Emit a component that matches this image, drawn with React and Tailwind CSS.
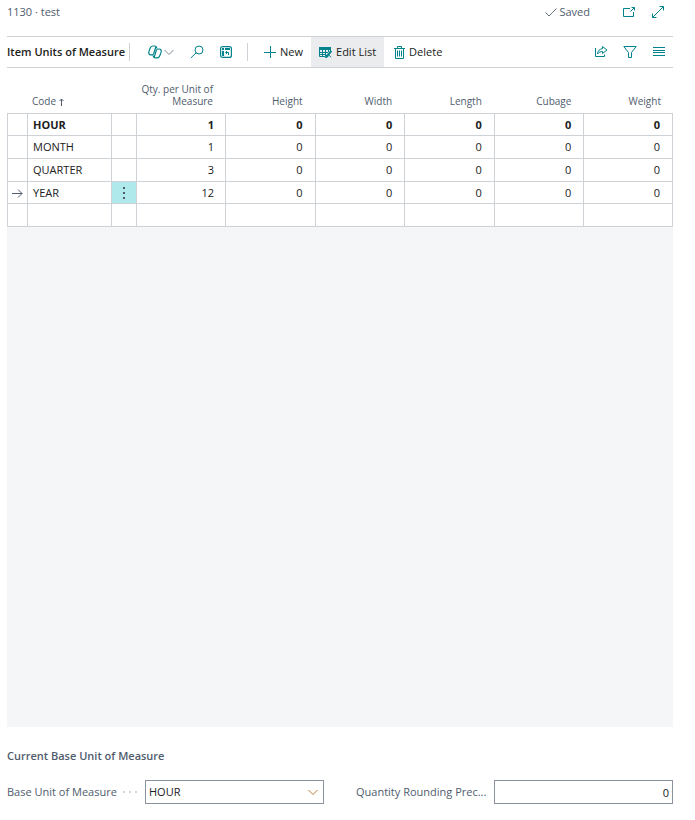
import React from "react";

const columns = ["Height", "Width", "Length", "Cubage", "Weight"];

const rows = [
  { code: "HOUR", qty: 1, base: true, height: "h-[22px]" },
  { code: "MONTH", qty: 1, height: "h-[23px]" },
  { code: "QUARTER", qty: 3, height: "h-[23px]" },
  { code: "YEAR", qty: 12, selected: true, height: "h-[22px]" },
  { code: "", height: "h-[23px]" },
];

function Icon({ w = 14, h = 14, className = "text-[#00838c]", children }) {
  return (
    <svg
      width={w}
      height={h}
      viewBox={`0 0 ${w} ${h}`}
      fill="none"
      stroke="currentColor"
      strokeWidth="1"
      className={`shrink-0 ${className}`}
      aria-hidden="true"
    >
      {children}
    </svg>
  );
}

const CheckIcon = () => (
  <Icon w={12} h={12} className="text-[#6b7582]">
    <path d="M0.5 6.5 4 10 11.5 2.5" />
  </Icon>
);

const PopOutIcon = () => (
  <Icon>
    <path d="M8 3.5H1.5v8h10V7M8.5 6.5l4-4M9.5 2.5h3v3" />
  </Icon>
);

const ExpandIcon = () => (
  <Icon>
    <path d="M1.5 12.5l11-11M8.5 1.5h4v4M1.5 8.5v4h4" />
  </Icon>
);

const CopilotIcon = () => (
  <Icon>
    <path
      strokeWidth="1.2"
      d="M9 3.300C8.600 1.700 8.200 1 7 1H4.800C3.400 1 2.600 1.800 2.100 3.300L1 6.400C.3 8.600 1.200 9.800 2.800 9.800H4.200C5.200 9.800 5.500 9 5.800 8.200L8 1.500M5 10.500C5.400 12 6 12.800 7.200 12.800H9.200C10.600 12.800 11.400 12 11.900 10.500L13 7.400C13.700 5.200 12.800 4 11.200 4H9.800C8.800 4 8.500 4.800 8.200 5.600L6.200 12.300"
    />
  </Icon>
);

const ChevronIcon = ({ className = "text-[#7f8894]" }) => (
  <Icon w={10} h={10} className={className}>
    <path d="M0.500 3 5 7.500 9.500 3" />
  </Icon>
);

const SearchIcon = () => (
  <Icon>
    <circle cx="9" cy="5" r="4" />
    <path d="M6.100 7.900 0.800 13" />
  </Icon>
);

const AnalyzeIcon = () => (
  <Icon w={12} h={12}>
    <rect x="0.600" y="0.600" width="10.800" height="10.800" rx="2" strokeWidth="1.200" />
    <path d="M2 2h2v2H2zM5 2h5v2H5zM2 5h2v5H2z" fill="currentColor" stroke="none" />
    <path d="M7 5 5.500 6.500 7 8M6 6.500h2.500V9" />
  </Icon>
);

const PlusIcon = () => (
  <Icon w={12} h={12}>
    <path d="M6.500 0v12M0 6.500h12" />
  </Icon>
);

const EditListIcon = () => (
  <Icon w={13} h={12}>
    <path d="M0 1h12v3H0z" fill="currentColor" stroke="none" />
    <path d="M.5 1.500v9H6M.5 6.500H9M.5 8.500H7M3.500 4v6.500M6.500 4v6M9.500 4v2M11.500 4v1" />
    <path d="M12.300 5 8 10.200" strokeWidth="2" />
    <path d="M7.500 9 6.300 11.800l2.900-1.300zM9.500 8.500l2.500 2.800" fill="currentColor" />
  </Icon>
);

const TrashIcon = () => (
  <Icon w={11} h={13}>
    <path d="M0 2.500h11M3.500 2V.5h4V2M1.500 3v9.500h8V3M3.500 4.500v6M5.500 4.500v6M7.500 4.500v6" />
  </Icon>
);

const ShareIcon = () => (
  <Icon>
    <path d="M1.500 3v8.500h9V9.500M8.500 1.500l4.500 3.500-4.500 3.500v-2C6.500 6.500 5 7 3.500 9c.3-3.300 2-5 5-5.300z" />
  </Icon>
);

const FilterIcon = () => (
  <Icon>
    <path d="M.8 1.500h12.400L8.500 7.500v5h-3v-5z" />
  </Icon>
);

const ListIcon = () => (
  <Icon w={13}>
    <path d="M1 2.500h12M1 5.500h12M1 7.500h12M1 10.500h12" />
  </Icon>
);

const ArrowIcon = () => (
  <Icon w={11} h={10} className="mx-auto text-[#505c6d]">
    <path d="M0 5.500h10M6 1.500l4 4-4 4" />
  </Icon>
);

const SortUpIcon = () => (
  <Icon w={5} h={8} className="ml-[3px] inline-block text-[#505c6d]">
    <path d="M2.500 8V1M.5 3l2-2 2 2" />
  </Icon>
);

const Divider = () => <span className="h-[18px] w-px shrink-0 bg-[#ced1d6]" />;

export default function App() {
  return (
    <main className="flex min-h-screen flex-col bg-white pr-[22px] pb-4 pl-[7px] font-['Open_Sans','Noto_Sans',sans-serif] text-[11px] leading-4 text-[#505c6d]">
      <header className="flex h-9 items-center pb-3">
        <span>1130 · test</span>
        <span className="ml-auto flex items-center gap-0.5">
          <CheckIcon />
          Saved
        </span>
        <button type="button" aria-label="Open in new window" className="ml-8">
          <PopOutIcon />
        </button>
        <button type="button" aria-label="Expand" className="mr-2 ml-[15px]">
          <ExpandIcon />
        </button>
      </header>

      <div className="flex h-8 shrink-0 items-center border-y border-[#ced1d6] text-[#212121]">
        <h1 className="mr-1 font-semibold whitespace-nowrap">Item Units of Measure</h1>
        <Divider />
        <button type="button" aria-label="Copilot" className="ml-[18px] flex items-center gap-0.5">
          <CopilotIcon />
          <ChevronIcon />
        </button>
        <button type="button" aria-label="Search" className="ml-4">
          <SearchIcon />
        </button>
        <button type="button" aria-label="Analyze" className="mr-[15px] ml-4">
          <AnalyzeIcon />
        </button>
        <Divider />
        <button type="button" className="ml-4 flex items-center gap-1">
          <PlusIcon />
          New
        </button>
        <button
          type="button"
          className="ml-2 flex h-full items-center gap-1 bg-[#eaecee] px-2 whitespace-nowrap"
        >
          <EditListIcon />
          Edit List
        </button>
        <button type="button" className="ml-[10px] flex items-center gap-1">
          <TrashIcon />
          Delete
        </button>
        <div className="mr-2 ml-auto flex items-center gap-[15px]">
          <button type="button" aria-label="Share">
            <ShareIcon />
          </button>
          <button type="button" aria-label="Filter">
            <FilterIcon />
          </button>
          <button type="button" aria-label="Show as list">
            <ListIcon />
          </button>
        </div>
      </div>

      <table className="w-full table-fixed border-separate border-spacing-0">
        <colgroup>
          <col className="w-5" />
          <col className="w-[84px]" />
          <col className="w-[25px]" />
          <col className="w-[89px]" />
          <col />
          <col />
          <col />
          <col />
          <col />
        </colgroup>
        <thead>
          <tr className="h-[46px] align-bottom text-[10px] leading-3 [&>th]:border-b [&>th]:border-[#ced1d6] [&>th]:pb-[6px] [&>th]:font-normal">
            <th aria-label="Current row" />
            <th className="pl-[5px] text-left">
              Code
              <SortUpIcon />
            </th>
            <th aria-label="Row menu" />
            <th className="pr-3 text-right">Qty. per Unit of Measure</th>
            {columns.map((name) => (
              <th key={name} className="pr-3 text-right">
                {name}
              </th>
            ))}
          </tr>
        </thead>
        <tbody className="text-[#212121]">
          {rows.map((row) => (
            <tr
              key={row.code}
              className={`${row.height} leading-5 [&>td]:border-b [&>td]:border-l [&>td]:border-[#ced1d6] [&>td:last-child]:border-r ${
                row.base ? "font-bold" : ""
              }`}
            >
              <td>{row.selected && <ArrowIcon />}</td>
              <td className="pl-[5px]">{row.code}</td>
              <td className={row.selected ? "bg-[#b0e9ec]" : ""}>
                {row.selected && (
                  <button type="button" aria-label="Show more options" className="block w-full">
                    <Icon w={4} h={14} className="mx-auto text-[#505c6d]">
                      <path d="M1 2h2M1 7h2M1 12h2" strokeWidth="2" />
                    </Icon>
                  </button>
                )}
              </td>
              <td className="pr-[11px] text-right">{row.qty}</td>
              {columns.map((name) => (
                <td key={name} className="pr-3 text-right">
                  {row.code && 0}
                </td>
              ))}
            </tr>
          ))}
        </tbody>
      </table>

      <div className="flex-1 bg-[#f5f6f8]" />

      <section className="pt-[21px]">
        <h2 className="font-semibold">Current Base Unit of Measure</h2>
        <div className="mt-4 grid grid-cols-2 gap-8">
          <div className="flex items-center">
            <label htmlFor="base-unit" className="whitespace-nowrap">
              Base Unit of Measure
            </label>
            <span className="ml-auto flex gap-1 pr-2">
              <i className="size-0.5 bg-[#d3d6da]" />
              <i className="size-0.5 bg-[#d3d6da]" />
              <i className="size-0.5 bg-[#d3d6da]" />
            </span>
            <div className="relative w-[179px] shrink-0">
              <select
                id="base-unit"
                defaultValue="HOUR"
                className="block h-6 w-full appearance-none border border-[#8b92a0] bg-white px-[3px] text-[#212121]"
              >
                <option>HOUR</option>
                <option>MONTH</option>
                <option>QUARTER</option>
                <option>YEAR</option>
              </select>
              <span className="pointer-events-none absolute inset-y-0 right-[6px] flex items-center">
                <ChevronIcon className="text-[#bd7a3c]" />
              </span>
            </div>
          </div>
          <div className="flex items-center">
            <label htmlFor="precision" className="whitespace-nowrap">
              Quantity Rounding Prec...
            </label>
            <input
              id="precision"
              defaultValue="0"
              className="ml-auto block h-6 w-[179px] shrink-0 border border-[#8b92a0] bg-white px-[3px] text-right text-[#212121]"
            />
          </div>
        </div>
      </section>
    </main>
  );
}
